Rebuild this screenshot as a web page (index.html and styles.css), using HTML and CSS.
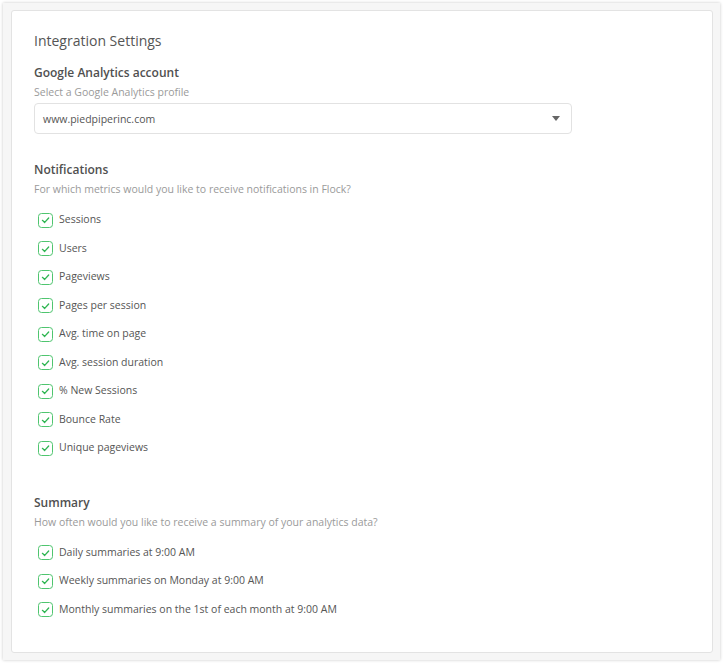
FILE: index.html
```html
<!DOCTYPE html>
<html>
<head>
<meta charset="utf-8">
<link rel="stylesheet" href="styles.css">
</head>
<body>
<div class="frame">
  <div class="card">
    <h1 class="title">Integration Settings</h1>

    <h2 class="heading first">Google Analytics account</h2>
    <p class="sub">Select a Google Analytics profile</p>
    <div class="select">
      <span>www.piedpiperinc.com</span>
      <span class="caret"></span>
    </div>

    <h2 class="heading section">Notifications</h2>
    <p class="sub">For which metrics would you like to receive notifications in Flock?</p>
    <ul class="checks">
      <li><span class="box"><svg viewBox="0 0 16 16"><polyline points="4.2,8.4 7,11 11.9,5.6"/></svg></span>Sessions</li>
      <li><span class="box"><svg viewBox="0 0 16 16"><polyline points="4.2,8.4 7,11 11.9,5.6"/></svg></span>Users</li>
      <li><span class="box"><svg viewBox="0 0 16 16"><polyline points="4.2,8.4 7,11 11.9,5.6"/></svg></span>Pageviews</li>
      <li><span class="box"><svg viewBox="0 0 16 16"><polyline points="4.2,8.4 7,11 11.9,5.6"/></svg></span>Pages per session</li>
      <li><span class="box"><svg viewBox="0 0 16 16"><polyline points="4.2,8.4 7,11 11.9,5.6"/></svg></span>Avg. time on page</li>
      <li><span class="box"><svg viewBox="0 0 16 16"><polyline points="4.2,8.4 7,11 11.9,5.6"/></svg></span>Avg. session duration</li>
      <li><span class="box"><svg viewBox="0 0 16 16"><polyline points="4.2,8.4 7,11 11.9,5.6"/></svg></span>% New Sessions</li>
      <li><span class="box"><svg viewBox="0 0 16 16"><polyline points="4.2,8.4 7,11 11.9,5.6"/></svg></span>Bounce Rate</li>
      <li><span class="box"><svg viewBox="0 0 16 16"><polyline points="4.2,8.4 7,11 11.9,5.6"/></svg></span>Unique pageviews</li>
    </ul>

    <h2 class="heading summary">Summary</h2>
    <p class="sub">How often would you like to receive a summary of your analytics data?</p>
    <ul class="checks">
      <li><span class="box"><svg viewBox="0 0 16 16"><polyline points="4.2,8.4 7,11 11.9,5.6"/></svg></span>Daily summaries at 9:00 AM</li>
      <li><span class="box"><svg viewBox="0 0 16 16"><polyline points="4.2,8.4 7,11 11.9,5.6"/></svg></span>Weekly summaries on Monday at 9:00 AM</li>
      <li><span class="box"><svg viewBox="0 0 16 16"><polyline points="4.2,8.4 7,11 11.9,5.6"/></svg></span>Monthly summaries on the 1st of each month at 9:00 AM</li>
    </ul>
  </div>
</div>
</body>
</html>
```

FILE: styles.css
```css
* { box-sizing: border-box; }
html, body { margin: 0; padding: 0; background: #ffffff; }
body {
  font-family: "Open Sans", "Noto Sans", sans-serif;
  padding: 3px 5px 5px 3px;
}
.frame {
  width: 717px;
  height: 657px;
  background: #f6f6f6;
  box-shadow: 0 0 3px rgba(0,0,0,0.22);
  padding: 7px 7px 7px 8px;
}
.card {
  height: 643px;
  background: #ffffff;
  border: 1px solid #e3e3e3;
  border-radius: 3px;
  padding: 20px 22px 0 22px;
}
.title {
  margin: 0;
  font-size: 14px;
  line-height: 20px;
  font-weight: 400;
  color: #555;
}
.heading {
  margin: 0;
  font-size: 12px;
  line-height: 18px;
  font-weight: 600;
  color: #505050;
}
.heading.first { margin-top: 13px; }
.heading.section { margin-top: 27px; }
.heading.summary { margin-top: 32.5px; }
.sub {
  margin: 2px 0 0;
  font-size: 10.5px;
  line-height: 16px;
  color: #9a9a9a;
}
.select {
  margin-top: 3px;
  width: 538px;
  height: 31px;
  border: 1px solid #e2e2e2;
  border-radius: 4px;
  display: flex;
  align-items: center;
  justify-content: space-between;
  padding: 0 11px 0 8px;
  font-size: 10.5px;
  color: #555;
}
.caret {
  width: 0;
  height: 0;
  border-left: 4px solid transparent;
  border-right: 4px solid transparent;
  border-top: 5px solid #666;
}
.checks {
  list-style: none;
  margin: 7.75px 0 0;
  padding: 0 0 0 4px;
}
.checks li {
  height: 28.5px;
  display: flex;
  align-items: center;
  font-size: 10.5px;
  color: #555;
}
.box {
  width: 15px;
  height: 15px;
  border: 1.3px solid #4fc56f;
  border-radius: 3.5px;
  margin-right: 6px;
  display: flex;
  align-items: center;
  justify-content: center;
  flex: none;
  position: relative;
  top: 1px;
}
.box svg {
  width: 14px;
  height: 14px;
  fill: none;
  stroke: #2fb552;
  stroke-width: 1.6;
  stroke-linecap: round;
  stroke-linejoin: round;
}
```
